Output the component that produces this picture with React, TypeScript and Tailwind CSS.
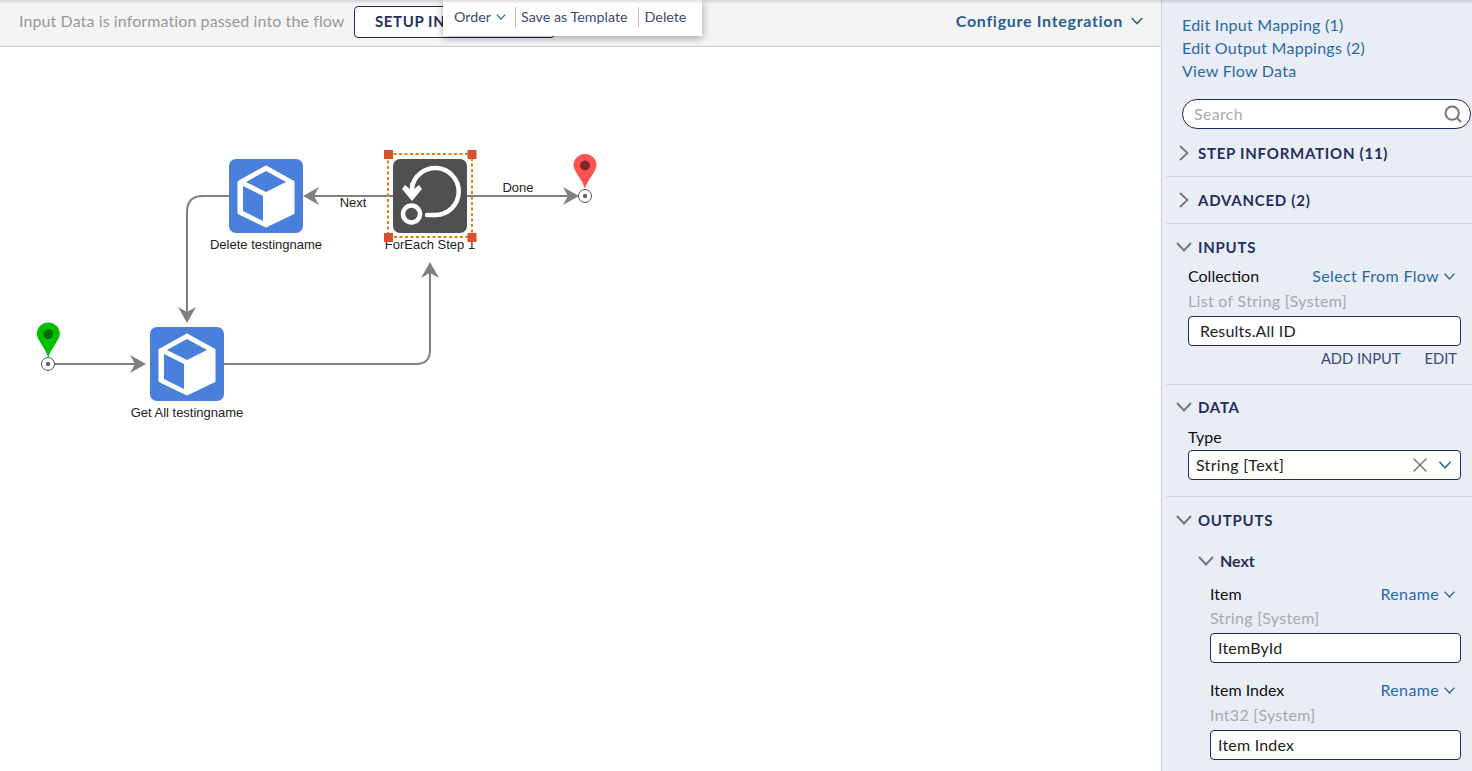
import { ReactNode } from 'react';
import { Search, X } from 'lucide-react';

function ChevronDown({ className }: { className: string }) {
  return (
    <svg viewBox="0 0 16 10" className={className} fill="none" stroke="currentColor" strokeWidth="2">
      <polyline points="1,1 8,8.5 15,1" />
    </svg>
  );
}

function ChevronRight() {
  return (
    <svg viewBox="0 0 10 16" className="w-[10px] h-[16px] text-[#777]" fill="none" stroke="currentColor" strokeWidth="1.8">
      <polyline points="1,1 8.5,8 1,15" />
    </svg>
  );
}

function SectionTitle({ open, children }: { open?: boolean; children: ReactNode }) {
  return (
    <div className="flex items-center h-[22px]">
      <div className="w-[32px] flex justify-start">
        {open ? <ChevronDown className="ml-[10px] w-[16px] h-[10px] text-[#777]" /> : <div className="ml-[13px] flex"><ChevronRight /></div>}
      </div>
      <span className="text-[15px] font-bold text-[#262f5e] tracking-[0.75px]">{children}</span>
    </div>
  );
}

function FieldHead({ label, action }: { label: string; action: string }) {
  return (
    <div className="flex items-center justify-between h-[22px] pr-[6px]">
      <span className="text-[16px] text-[#111]">{label}</span>
      <span className="flex items-center gap-[5px] text-[16px] text-[#2a69a8] tracking-[0.35px]">
        {action}
        <ChevronDown className="w-[11px] h-[7px] text-[#2a69a8]" />
      </span>
    </div>
  );
}

function TextBox({ value, indent }: { value: string; indent: string }) {
  return (
    <div className={`h-[30px] bg-white border border-[#1f2a66] rounded-[4px] flex items-center text-[16px] tracking-[0.2px] text-[#222] ${indent}`}>
      {value}
    </div>
  );
}

function TypeLine({ children }: { children: ReactNode }) {
  return <div className="h-[22px] leading-[22px] text-[16px] tracking-[0.3px] text-[#aaa]">{children}</div>;
}

function Arrow({ x, y, dir }: { x: number; y: number; dir: 'left' | 'right' | 'up' | 'down' }) {
  const rot = { right: 0, down: 90, left: 180, up: 270 }[dir];
  return <polygon points="0,0 -16,-9 -11,0 -16,9" fill="#808080" transform={`translate(${x} ${y}) rotate(${rot})`} />;
}

function CubeNode({ x, y }: { x: number; y: number }) {
  return (
    <g transform={`translate(${x} ${y})`}>
      <rect width="74" height="74" rx="7" fill="#4a7fdb" />
      <polygon points="37,8 64,23 64,54 37,67 10,54 10,23" fill="#fff" stroke="#fff" strokeWidth="3" strokeLinejoin="round" />
      <polygon points="37,12 57,23 37,33 17,23" fill="#4a7fdb" />
      <polygon points="14,27 34,37 34,62 14,52" fill="#4a7fdb" />
    </g>
  );
}

function Pin({ x, tip, head, fill, dot }: { x: number; tip: number; head: number; fill: string; dot: string }) {
  return (
    <g>
      <path d={`M${x} ${tip} C${x - 2} ${tip - 9} ${x - 11.5} ${head + 6} ${x - 11.5} ${head} A11.5 11.5 0 1 1 ${x + 11.5} ${head} C${x + 11.5} ${head + 6} ${x + 2} ${tip - 9} ${x} ${tip} Z`} fill={fill} />
      <circle cx={x} cy={head} r="5" fill={dot} />
    </g>
  );
}

function Terminal({ x, y }: { x: number; y: number }) {
  return (
    <g>
      <circle cx={x} cy={y} r="6.5" fill="#fff" stroke="#555" strokeWidth="1" />
      <circle cx={x} cy={y} r="2.2" fill="#666" />
    </g>
  );
}

function Diagram() {
  const label = 'text-[13px] fill-[#222]';
  const font = { fontFamily: '"Liberation Sans", Arial, sans-serif' };
  return (
    <svg width="1161" height="724" viewBox="0 47 1161 724" className="block" style={font}>
      <g fill="none" stroke="#808080" strokeWidth="2">
        <path d="M393 196 H312" />
        <path d="M229 196 H203 Q187 196 187 212 V315" />
        <path d="M55 364 H138" />
        <path d="M224 364 H416 Q430 364 430 350 V270" />
        <path d="M467 196 H572" />
      </g>
      <Arrow x={303} y={196} dir="left" />
      <Arrow x={187} y={323} dir="down" />
      <Arrow x={146} y={364} dir="right" />
      <Arrow x={430} y={262} dir="up" />
      <Arrow x={579} y={196} dir="right" />

      <CubeNode x={229} y={159} />
      <CubeNode x={150} y={327} />

      <g transform="translate(393 159)">
        <rect width="74" height="74" rx="7" fill="#505050" />
        <g fill="none" stroke="#fff" strokeWidth="4.5">
          <path d="M34 56 H43 A23.5 23.5 0 1 0 19 29" strokeLinecap="round" />
          <circle cx="18.5" cy="55" r="8.5" />
        </g>
        <polygon points="19,42 9,30 12,26 17,30 17,24 21,24 21,30 26,26 29,30" fill="#fff" />
      </g>

      <text x="266" y="249" textAnchor="middle" className={label}>Delete testingname</text>
      <text x="430" y="249" textAnchor="middle" className={label}>ForEach Step 1</text>
      <text x="187" y="417" textAnchor="middle" className={label}>Get All testingname</text>
      <text x="353" y="207" textAnchor="middle" className={label}>Next</text>
      <text x="518" y="192" textAnchor="middle" className={label}>Done</text>

      <rect x="388" y="154" width="84" height="83" fill="none" stroke="#e67e0a" strokeWidth="2" strokeDasharray="3 2.5" />
      <rect x="384" y="150" width="9" height="9" fill="#d9512c" />
      <rect x="467.5" y="150" width="9" height="9" fill="#d9512c" />
      <rect x="384" y="233" width="9" height="9" fill="#d9512c" />
      <rect x="467.5" y="233" width="9" height="9" fill="#d9512c" />

      <Terminal x={585} y={196} />
      <Pin x={585} tip={189} head={165.5} fill="#ff5252" dot="#7c2a2a" />
      <Terminal x={48} y={364} />
      <Pin x={48.3} tip={358} head={334} fill="#00c000" dot="#006f00" />
    </svg>
  );
}

function Toolbar() {
  return (
    <div className="relative h-[47px] shrink-0 bg-[#f4f4f4] border-b border-[#cccccc] flex items-center pl-[19px] pr-[18px]">
      <span className="w-[325px] whitespace-nowrap -mt-[5px] text-[16px] tracking-[0.1px] text-[#999]">Input Data is information passed into the flow</span>
      <div className="ml-[10px] w-[201px] h-[32px] -mt-[3px] border border-[#1f2a66] rounded-[4px] bg-white flex items-center pl-[20px] text-[15px] font-bold text-[#262f5e] tracking-[0.6px]">
        SETUP INPUT
      </div>
      <div className="ml-auto -mt-[5px] flex items-center gap-[8px] text-[16px] font-bold text-[#2b5f8f] tracking-[0.7px]">
        Configure Integration
        <ChevronDown className="w-[12px] h-[8px] text-[#2b5f8f]" />
      </div>
      <div className="absolute left-[443px] top-0 w-[259px] h-[36px] bg-white shadow-[0_2px_8px_rgba(0,0,0,0.35)] flex items-center pl-[11px] pb-[2px] text-[14.3px] text-[#3c4a7c]">
        <span>Order</span>
        <ChevronDown className="ml-[5px] w-[10px] h-[6px] text-[#2a69a8]" />
        <span className="ml-[9px] pl-[5px] border-l border-[#bbb] leading-[20px]">Save as Template</span>
        <span className="ml-[10px] pl-[6px] border-l border-[#bbb] leading-[20px]">Delete</span>
      </div>
    </div>
  );
}

function Panel() {
  return (
    <aside className="w-[311px] shrink-0 h-full bg-[#e9edf5] border-l border-[#cfd2d8] overflow-hidden">
      <div className="pl-[20px] pt-[13px] text-[16px] leading-[23px] text-[#2a69a8] tracking-[0.25px]">
        <div>Edit Input Mapping (1)</div>
        <div>Edit Output Mappings (2)</div>
        <div>View Flow Data</div>
      </div>
      <div className="ml-[20px] mt-[17px] w-[289px] h-[30px] rounded-full bg-white border border-[#1f2a66] flex items-center justify-between pl-[11px] pr-[7px] text-[16px] tracking-[0.3px] text-[#aaa]">
        Search
        <Search className="w-[20px] h-[20px] text-[#777]" strokeWidth={2.4} />
      </div>
      <div className="ml-[4px]">
        <div className="h-[48px] pt-[13px] border-b border-[#d3d5da]">
          <SectionTitle>STEP INFORMATION (11)</SectionTitle>
        </div>
        <div className="h-[47px] pt-[12px] border-b border-[#d3d5da]">
          <SectionTitle>ADVANCED (2)</SectionTitle>
        </div>
        <div className="h-[161px] pt-[12px] border-b border-[#d3d5da]">
          <SectionTitle open>INPUTS</SectionTitle>
          <div className="ml-[22px] mt-[7px] w-[273px]">
            <FieldHead label="Collection" action="Select From Flow" />
            <div className="mt-[3px]"><TypeLine>List of String [System]</TypeLine></div>
            <div className="mt-[4px]"><TextBox value="Results.All ID" indent="pl-[11px]" /></div>
            <div className="flex justify-end gap-[24px] pr-[4px] mt-[3px] text-[14.7px] leading-[18px] text-[#3c4a7c]">
              <span>ADD INPUT</span>
              <span>EDIT</span>
            </div>
          </div>
        </div>
        <div className="h-[112px] pt-[11px] border-b border-[#d3d5da]">
          <SectionTitle open>DATA</SectionTitle>
          <div className="ml-[22px] mt-[8px] w-[273px]">
            <div className="h-[22px] leading-[22px] text-[16px] text-[#111]">Type</div>
            <div className="mt-[2px] h-[30px] bg-white border border-[#1f2a66] rounded-[4px] flex items-center pl-[7px] pr-[8px] text-[16px] tracking-[0.3px] text-[#222]">
              String [Text]
              <X className="ml-auto w-[24px] h-[24px] text-[#777]" strokeWidth={1.5} />
              <ChevronDown className="ml-[6px] w-[14px] h-[8px] text-[#2a69a8]" />
            </div>
          </div>
        </div>
        <div className="pt-[12px]">
          <SectionTitle open>OUTPUTS</SectionTitle>
          <div className="mt-[19px] flex items-center h-[22px]">
            <ChevronDown className="ml-[32px] w-[16px] h-[10px] text-[#777]" />
            <span className="ml-[6px] text-[16px] font-bold text-[#262f5e]">Next</span>
          </div>
          <div className="ml-[44px] mt-[11px] w-[251px]">
            <FieldHead label="Item" action="Rename" />
            <div className="mt-[2px]"><TypeLine>String [System]</TypeLine></div>
            <div className="mt-[4px]"><TextBox value="ItemById" indent="pl-[7px]" /></div>
            <div className="mt-[16px]"><FieldHead label="Item Index" action="Rename" /></div>
            <div className="mt-[3px]"><TypeLine>Int32 [System]</TypeLine></div>
            <div className="mt-[4px]"><TextBox value="Item Index" indent="pl-[7px]" /></div>
          </div>
        </div>
      </div>
    </aside>
  );
}

export default function App() {
  return (
    <div className="relative w-[1472px] h-[771px] flex bg-white overflow-hidden font-['Lato','Open_Sans',sans-serif]">
      <main className="w-[1161px] shrink-0 flex flex-col">
        <Toolbar />
        <Diagram />
      </main>
      <Panel />
      <div className="absolute left-0 right-0 top-0 h-[4px] bg-gradient-to-b from-[#00000022] to-transparent" />
    </div>
  );
}
